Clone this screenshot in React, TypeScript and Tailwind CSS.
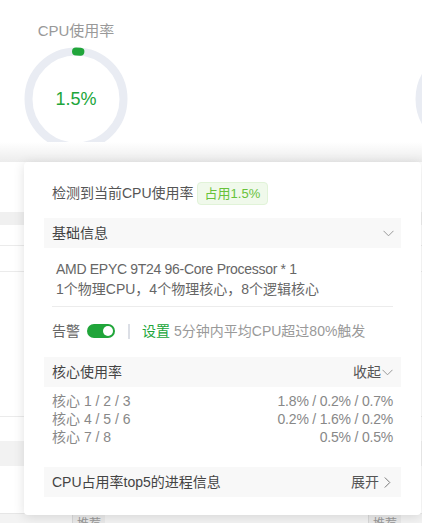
import React from "react";

const font = {
  fontFamily: '"Liberation Sans", "Noto Sans CJK SC", sans-serif',
};

function Ring({ value }: { value: number }) {
  const r = 47.5;
  const c = 2 * Math.PI * r;
  return (
    <svg width="104" height="104" viewBox="0 0 104 104">
      <circle cx="52" cy="52" r={r} fill="none" stroke="#e9ecf3" strokeWidth="8" />
      <circle
        cx="52"
        cy="52"
        r={r}
        fill="none"
        stroke="#20a53a"
        strokeWidth="8"
        strokeLinecap="round"
        strokeDasharray={`${(c * value) / 100} ${c}`}
        transform="rotate(-90 52 52)"
      />
    </svg>
  );
}

function Gauge({ value, label = true }: { value: number; label?: boolean }) {
  return (
    <div className="flex flex-col items-center w-[104px] shrink-0">
      <span className="text-[15px] leading-[18px] text-[#999]">{label ? "CPU使用率" : "\u00a0"}</span>
      <div className="relative mt-[7px] w-[104px] h-[104px]">
        <Ring value={value} />
        {label && (
          <div className="absolute inset-0 flex items-center justify-center text-[18px] text-[#20a53a]">
            {value}%
          </div>
        )}
      </div>
    </div>
  );
}

function ChevronDown() {
  return (
    <svg width="11" height="7" viewBox="0 0 11 7" fill="none">
      <polyline points="0.5,0.8 5.5,5.8 10.5,0.8" stroke="#999" strokeWidth="1" />
    </svg>
  );
}

function ChevronRight() {
  return (
    <svg width="7" height="11" viewBox="0 0 7 11" fill="none">
      <polyline points="0.8,0.5 5.8,5.5 0.8,10.5" stroke="#777" strokeWidth="1" />
    </svg>
  );
}

function SectionHeader({ title, right }: { title: string; right: React.ReactNode }) {
  return (
    <div className="flex items-center justify-between h-[30px] px-2 bg-[#f8f8f8]">
      <span className="text-[14px] text-[#444]">{title}</span>
      {right}
    </div>
  );
}

const cores = [
  { name: "核心 1 / 2 / 3", value: "1.8% / 0.2% / 0.7%" },
  { name: "核心 4 / 5 / 6", value: "0.2% / 1.6% / 0.2%" },
  { name: "核心 7 / 8", value: "0.5% / 0.5%" },
];

export default function App() {
  return (
    <div className="relative w-[422px] h-[523px] overflow-hidden bg-white" style={font}>
      {/* background page */}
      <div className="flex flex-col">
        <div className="h-[142px] flex gap-[287px] pl-[24px] pt-[22px] overflow-hidden">
          <Gauge value={1.5} />
          <Gauge value={0} label={false} />
        </div>
        <div className="h-[20px] bg-gradient-to-b from-white to-[#ececec]" />
        <div className="h-[50px]" />
        <div className="h-[13px] bg-[#f0f0f0]" />
        <div className="h-[21px] border-b border-[#ebebeb]" />
        <div className="h-[26px] border-b border-[#ebebeb]" />
        <div className="h-[145px] border-b border-[#ebebeb]" />
        <div className="h-[24px]" />
        <div className="h-[25px] bg-[#f2f2f2]" />
        <div className="h-[48px] border-b border-[#e6e6e6]" />
        <div className="h-[20px] bg-[#f3f3f3] flex">
          <span className="ml-[72px] mt-[1px] px-[4px] h-[18px] border-l border-[#d8d8d8] bg-[#e9e9e9] text-[12px] leading-[18px] text-[#999]">
            推荐
          </span>
          <span className="ml-[263px] mt-[1px] px-[4px] h-[18px] border-l border-[#d8d8d8] bg-[#e9e9e9] text-[12px] leading-[18px] text-[#999]">
            推荐
          </span>
        </div>
      </div>

      {/* popover */}
      <div className="absolute left-[24px] top-[162px] w-[397px] h-[353px] bg-white rounded-[4px] shadow-[0_2px_12px_rgba(0,0,0,0.12)] p-[20px] flex flex-col">
        <div className="flex items-center h-[23px] pl-2 gap-[3px]">
          <span className="text-[14px] text-[#555]">检测到当前CPU使用率</span>
          <span className="h-[23px] px-[7px] flex items-center rounded-[4px] border border-[#e1f3d8] bg-[#f0f9eb] text-[13px] text-[#67c23a]">
            占用1.5%
          </span>
        </div>

        <div className="mt-[13px]">
          <SectionHeader title="基础信息" right={<span className="mr-[-1px]"><ChevronDown /></span>} />
        </div>
        <div className="pl-3 pt-[11px] flex flex-col text-[14px] leading-[20px] text-[#666]">
          <span className="tracking-[-0.3px]">AMD EPYC 9T24 96-Core Processor * 1</span>
          <span>1个物理CPU，4个物理核心，8个逻辑核心</span>
        </div>
        <div className="mx-2 mt-[7px] border-t border-[#ececec]" />

        <div className="flex items-center h-[16px] mt-[16px] pl-2 text-[14px]">
          <span className="text-[#666]">告警</span>
          <span className="ml-[7px] w-[28px] h-[14px] rounded-full bg-[#20a53a] flex items-center justify-end pr-[2px]">
            <span className="w-[10px] h-[10px] rounded-full bg-white" />
          </span>
          <span className="ml-[13px] w-[2px] h-[15px] bg-[#dcdfe6]" />
          <span className="ml-[12px] text-[#20a53a]">设置</span>
          <span className="ml-[4px] text-[#999]">5分钟内平均CPU超过80%触发</span>
        </div>

        <div className="mt-[18px]">
          <SectionHeader
            title="核心使用率"
            right={
              <span className="flex items-center gap-[1px] text-[14px] text-[#555]">
                收起
                <ChevronDown />
              </span>
            }
          />
        </div>
        <div className="flex flex-col pt-[5px] px-2 text-[14px] leading-[18px] text-[#888]">
          {cores.map((c) => (
            <div key={c.name} className="flex justify-between">
              <span>{c.name}</span>
              <span className="tracking-[-0.2px]">{c.value}</span>
            </div>
          ))}
        </div>

        <div className="mt-[21px]">
          <SectionHeader
            title="CPU占用率top5的进程信息"
            right={
              <span className="flex items-center gap-[5px] text-[14px] text-[#555] mr-[2px]">
                展开
                <ChevronRight />
              </span>
            }
          />
        </div>
      </div>
    </div>
  );
}
